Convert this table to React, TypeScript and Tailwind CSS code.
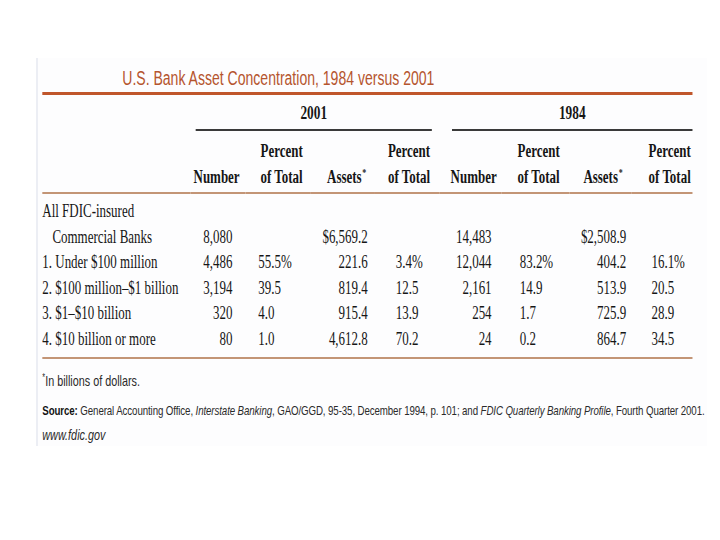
const serif = "font-['Liberation_Serif','Times_New_Roman',serif]"
const sans = "font-['Liberation_Sans',Arial,sans-serif]"

type Col = { head: [string, string]; star?: boolean; hc: string; vc: string }

const cols: Col[] = [
  { head: ['', 'Number'], hc: 'items-end pr-[8px]', vc: 'text-right pr-[18px]' },
  { head: ['Percent', 'of Total'], hc: 'items-start pl-[21px]', vc: 'text-left pl-[18px]' },
  { head: ['', 'Assets'], star: true, hc: 'items-end pr-[12px]', vc: 'text-right pr-[10px]' },
  { head: ['Percent', 'of Total'], hc: 'items-start pl-[18px]', vc: 'text-left pl-[29px]' },
  { head: ['', 'Number'], hc: 'items-end pr-[7px]', vc: 'text-right pr-[14px]' },
  { head: ['Percent', 'of Total'], hc: 'items-start pl-[22px]', vc: 'text-left pl-[25px]' },
  { head: ['', 'Assets'], star: true, hc: 'items-end pr-[12px]', vc: 'text-right pr-[7px]' },
  { head: ['Percent', 'of Total'], hc: 'items-start pl-[24px]', vc: 'text-left pl-[28px]' },
]

const rows: { label: string; indent?: boolean; values: string[] }[] = [
  { label: 'All FDIC-insured', values: [] },
  { label: 'Commercial Banks', indent: true, values: ['8,080', '', '$6,569.2', '', '14,483', '', '$2,508.9', ''] },
  { label: '1. Under $100 million', values: ['4,486', '55.5%', '221.6', '3.4%', '12,044', '83.2%', '404.2', '16.1%'] },
  { label: '2. $100 million–$1 billion', values: ['3,194', '39.5', '819.4', '12.5', '2,161', '14.9', '513.9', '20.5'] },
  { label: '3. $1–$10 billion', values: ['320', '4.0', '915.4', '13.9', '254', '1.7', '725.9', '28.9'] },
  { label: '4. $10 billion or more', values: ['80', '1.0', '4,612.8', '70.2', '24', '0.2', '864.7', '34.5'] },
]

const grid = 'grid grid-cols-[206px_76px_90px_90px_90px_86px_94px_86px_85px]'

export default function App() {
  return (
    <div className="w-[720px] h-[540px] overflow-hidden bg-white">
      <div className="ml-[36px] mt-[58px] w-[671px] h-[388px] overflow-hidden bg-[#fdfdfe] border-l-2 border-[#eceef4]">
        <div className="w-[932px] origin-top-left scale-x-[0.72] pl-[6px] text-[#161616]">
          <h1 className={`${sans} mt-[10px] pl-[111px] text-[19.5px] leading-[20px] text-[#b5552e]`}>
            U.S. Bank Asset Concentration, 1984 versus 2001
          </h1>
          <div className="mt-[4px] w-[903px] h-[3px] bg-[#c0562b]" />

          <div className={`${grid} ${serif} w-[903px]`}>
            <div className="col-start-2 col-span-4 ml-[7px] mr-[11px] mt-[8px] pb-[6px] border-b-2 border-[#3a3a3a] text-center text-[18.5px] leading-[20px] font-bold">
              2001
            </div>
            <div className="col-span-4 ml-[17px] mt-[8px] pb-[6px] border-b-2 border-[#3a3a3a] text-center text-[18.5px] leading-[20px] font-bold">
              1984
            </div>

            <div className="mt-[7px] border-b-2 border-[#c39576]" />
            {cols.map((c, i) => (
              <div
                key={i}
                className={`mt-[7px] pb-[2px] border-b-2 border-[#c39576] flex flex-col text-[18px] leading-[26px] font-bold ${c.hc}`}
              >
                <div className="flex flex-col items-center">
                  <span className="h-[26px]">{c.head[0]}</span>
                  <span>
                    {c.head[1]}
                    {c.star && <span className="relative -top-[7px] ml-[1px] text-[11px] leading-none">*</span>}
                  </span>
                </div>
              </div>
            ))}

            {rows.map((r, ri) => (
              <div key={ri} className="contents text-[18px] leading-[25.6px]">
                <div className={`${r.indent ? 'pl-[14px]' : ''} ${ri === 0 ? 'pt-[5px]' : ''} ${ri === rows.length - 1 ? 'pb-[4px]' : ''} whitespace-nowrap`}>
                  {r.label}
                </div>
                {cols.map((c, ci) => (
                  <div
                    key={ci}
                    className={`${c.vc} ${ri === 0 ? 'pt-[5px]' : ''} ${ri === rows.length - 1 ? 'pb-[4px]' : ''}`}
                  >
                    {r.values[ci] ?? ''}
                  </div>
                ))}
              </div>
            ))}
          </div>
          <div className="w-[903px] h-[2px] bg-[#c39576]" />

          <p className={`${sans} mt-[12px] text-[15px] leading-[20px] text-[#2a2a2a]`}>
            <span className="relative -top-[5px] text-[10px] leading-none">*</span>In billions of dollars.
          </p>
          <p className={`${sans} mt-[9px] text-[13.5px] tracking-[-0.15px] leading-[22px] text-[#2a2a2a] whitespace-nowrap`}>
            <span className="font-bold text-[#111]">Source:</span> General Accounting Office,{' '}
            <i>Interstate Banking</i>, GAO/GGD, 95-35, December 1994, p. 101; and{' '}
            <i>FDIC Quarterly Banking Profile</i>, Fourth Quarter 2001.
          </p>
          <p className={`${sans} mt-[2px] text-[15px] leading-[22px] italic text-[#2a2a2a]`}>www.fdic.gov</p>
        </div>
      </div>
    </div>
  )
}
